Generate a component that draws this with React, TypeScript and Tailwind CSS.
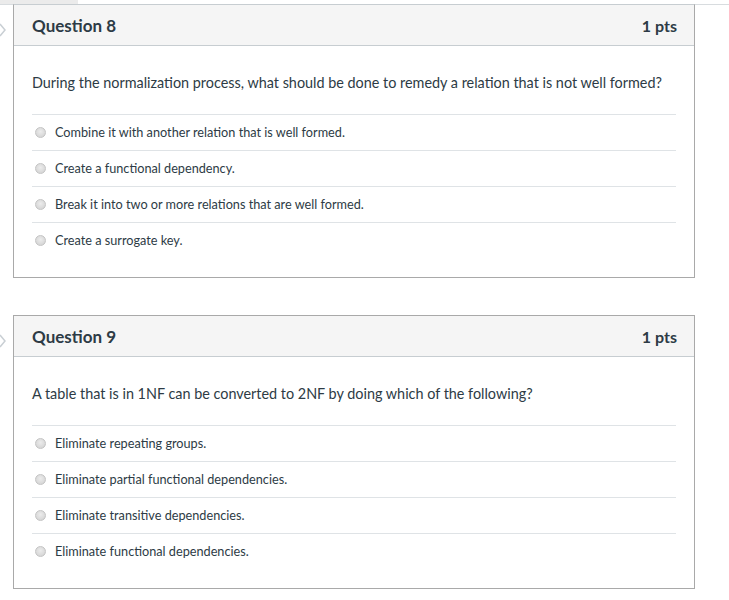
import React from "react";

const font = { fontFamily: "Lato, 'Open Sans', sans-serif" };

function Radio() {
  return (
    <span className="inline-block w-[11px] h-[11px] rounded-full border border-[#c4c4c4] bg-[radial-gradient(circle_at_50%_40%,#ececec,#cfcfcf)] shrink-0" />
  );
}

function Chevron() {
  return (
    <svg width="8" height="14" viewBox="0 0 8 14" className="absolute left-[-1px] top-[19px]">
      <path d="M1 1 L6 7 L1 13" fill="none" stroke="#c9cfd4" strokeWidth="1.5" />
    </svg>
  );
}

function Question({ n, text, answers, first }: { n: number; text: string; answers: string[]; first?: boolean }) {
  return (
    <div className="relative pl-[13px] w-[695px]">
      <Chevron />
      <div className={"border border-[#a9a9a9] bg-white " + (first ? "border-t-[#c7cdd1]" : "")}>
        <div className="h-[41px] pt-[2px] bg-[#f5f5f5] border-b border-[#c7cdd1] flex items-center justify-between pl-[18px] pr-[17px]">
          <span className="text-[17px] font-bold text-[#2d3b45]">Question {n}</span>
          <span className="text-[16px] font-bold text-[#2d3b45]">1 pts</span>
        </div>
        <div className="px-[18px] pt-[27px] pb-[19px]">
          <div className="text-[14.4px] leading-[20px] text-[#2d3b45] h-[20px] whitespace-nowrap">{text}</div>
          <div className="mt-[21px]">
            {answers.map((a, i) => (
              <div key={i} className="h-[36px] border-t border-[#dfe3e6] flex items-center pl-[3px] gap-[9px]">
                <Radio />
                <span className="text-[12.7px] text-[#2d3b45]">{a}</span>
              </div>
            ))}
          </div>
        </div>
      </div>
    </div>
  );
}

export default function App() {
  return (
    <div className="w-[729px] h-[600px] bg-white relative overflow-hidden" style={font}>
      <div className="h-[4px] w-[78px] bg-[#ebebeb]" />
      <div className="absolute left-0 top-[4px] w-[729px] h-px bg-[#d8dcdf]" />
      <Question
        n={8}
        first
        text="During the normalization process, what should be done to remedy a relation that is not well formed?"
        answers={[
          "Combine it with another relation that is well formed.",
          "Create a functional dependency.",
          "Break it into two or more relations that are well formed.",
          "Create a surrogate key.",
        ]}
      />
      <div className="h-[37px]" />
      <Question
        n={9}
        text="A table that is in 1NF can be converted to 2NF by doing which of the following?"
        answers={[
          "Eliminate repeating groups.",
          "Eliminate partial functional dependencies.",
          "Eliminate transitive dependencies.",
          "Eliminate functional dependencies.",
        ]}
      />
    </div>
  );
}
